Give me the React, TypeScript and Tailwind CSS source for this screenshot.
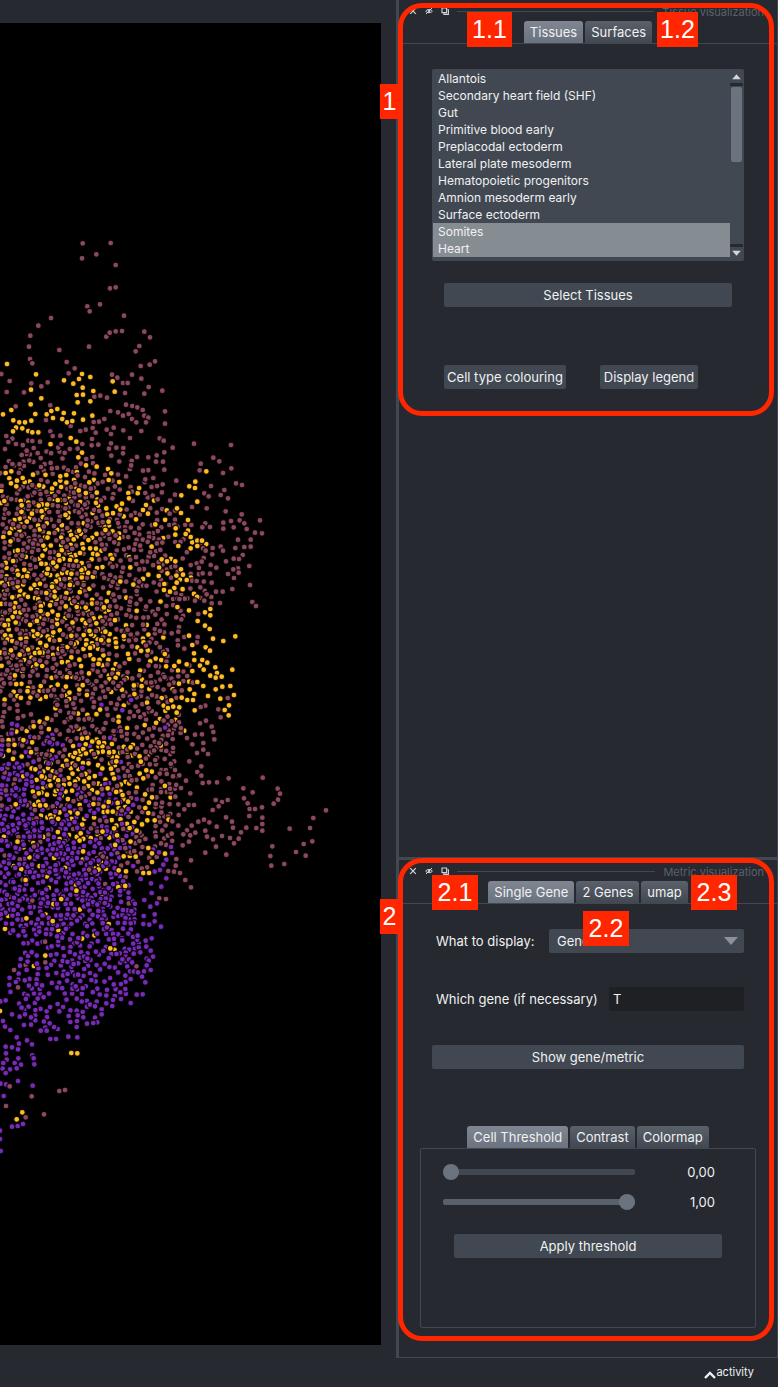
import type { ReactNode } from "react";
import clsx from "clsx";

type Dot = { x: number; y: number; fill: string };

const MAUVE = "#8c495e";
const AMBER = "#ffbb24";
const VIOLET = "#782bb6";

// Outlying cells, stored as flat "x y" lists in thirds of a pixel from a given top edge.
function unpack(top: number, fill: string, data: string): Dot[] {
  const n = data.trim().split(/\s+/).map(Number);
  const dots: Dot[] = [];
  for (let i = 0; i + 1 < n.length; i += 2) dots.push({ x: n[i] / 3, y: top + n[i + 1] / 3, fill });
  return dots;
}

const outliers: Dot[] = [
  ...unpack(220, MAUVE, `248 70 332 69 289 103 246 115 347 135 330 205 347 202 262 259 300 253 269 274 372 287 153 294 115 317 91 347 87 380 178 390 267 380 319 350 329 338 347 334 366 333 433 335 450 352 418 378 407 394 465 424 449 434 422 438 90 417 97 430 200 426 224 445 206 460 4 462 29 483 20 516 72 517 94 490 124 499 143 487 336 464 352 473 396 464 424 476 369 489 383 489 375 519 446 501 433 521 487 512 283 530 301 527 321 533 47 559 151 556 378 554 397 558 412 562 428 570 331 573 354 577 369 587 386 582 396 597 409 607 433 587 445 593 438 607 495 574 495 611 313 597 297 605 281 606 341 623 320 629 333 642 370 631 424 633 390 654 479 655 491 662 518 683 493 697 582 671 693 675 470 706 445 712 411 711 489 725 493 749 640 713 658 724 602 731 599 751 694 745 669 759 529 782 708 790 726 795 633 798 673 810 613 820 626 829 662 825 684 835 525 824 473 838 576 861 620 865 677 874 725 883 509 881 488 793 436 778 429 752 327 686 349 683 370 684 369 700 334 707 138 600 212 618 151 634 158 648 181 647 278 624 257 629 241 633 287 638 276 657 333 670 295 674 275 676 277 711 247 672 37 656 19 648 25 666 48 672 15 687 85 662 97 663 120 665 65 705 80 692`),
  ...unpack(220, AMBER, `21 432 108 463 192 481 246 462 237 477 271 471 220 491 248 503 280 513 230 525 249 524 233 547 271 544 338 484 344 515 93 509 124 535 92 553 9 583 34 570 106 582 140 583 154 573 172 567 191 579 222 580 159 594 187 597 201 607 217 603 249 599 277 587 40 601 58 607 75 607 94 602 48 623 67 625 39 634 85 633 97 637 115 637 212 654 229 665 246 698 235 712 258 736 290 740 324 747 334 760 326 780 358 786 385 819 387 835 438 855 429 870 444 881 531 865 544 879 592 845 544 826 568 799 585 804 586 785 619 754 17 759 34 754 28 775 33 790 51 782 68 774 49 799 99 764 181 769 199 765`),
  ...unpack(500, MAUVE, `780 61 765 98 786 100 725 43 677 34 620 25 719 61 733 70 740 87 693 63 701 82 670 68 670 86 616 70 607 82 630 81 574 75 714 119 752 119 752 140 733 141 706 144 662 140 669 152 728 165 717 177 701 176 678 184 748 198 714 205 716 218 700 208 684 222 702 234 750 255 697 267 757 306 768 318 668 275 648 275 660 309 634 291 635 310 613 302 620 283 649 203 637 163 638 144 609 145 617 152 611 174 632 195 605 185 630 221 635 248 601 262 590 243 608 220 585 302 595 342 537 381 535 395 515 400 533 421 553 411 534 436 553 446 593 411 591 427 544 358 529 352 618 662 635 680 640 696 643 718 600 670 606 703 610 729 591 759 624 762 585 704 561 714 577 733 655 628 662 652 683 594 616 617 602 621 535 529`),
  ...unpack(500, AMBER, `531 25 543 39 564 60 527 85 564 92 572 111 592 122 606 122 592 138 572 145 526 104 535 138 557 102 485 178 501 184 526 184 543 208 549 224 560 240 530 248 523 264 510 275 492 270 476 228 567 331 631 327 615 337 631 346 593 363 615 377 629 387 567 407 639 416 670 423 706 409 577 435 617 442 630 452 582 460 583 480 607 480 622 488 600 497 560 493 537 485 523 498 611 509 577 513 646 502 651 519 631 527 647 533 665 530 697 509 592 546 610 558 537 551 569 568 583 582 667 560 691 558 647 568 702 585 624 588 661 596 687 616 674 630 686 646 562 600 579 600 545 593 584 631 514 601 520 620 538 622 530 638`),
  ...unpack(740, MAUVE, `577 13 610 29 591 39 624 42 568 64 604 79 592 96 604 107 608 129 627 127 651 127 686 115 788 113 730 145 758 157 833 146 840 161 834 179 821 191 571 160 647 180 666 186 683 180 656 199 638 210 732 175 743 190 749 207 765 207 786 202 748 228 787 233 787 252 787 272 769 264 739 263 723 277 716 296 702 310 690 294 699 263 696 245 678 232 666 288 650 260 628 247 612 239 595 245 575 257 561 271 550 283 571 286 586 278 616 272 621 290 639 298 648 320 616 338 679 344 567 305 548 316 573 361 978 211 940 234 930 264 869 266 937 304 911 312 888 336 917 347 817 319 811 348 814 377 853 372 535 193 553 208 566 195 582 195 536 225 535 257 517 244 515 281 529 357 527 377 505 393 522 395 540 399 556 420 573 442 478 475 498 477 558 122 543 144 525 90 538 106 519 109`),
  ...unpack(740, VIOLET, `513 321 516 339 477 337 499 359 490 374 480 390 464 395 499 415 484 440 453 430 455 459 433 480 471 490 451 500 464 523 483 560 464 544 431 528 430 552 448 554 455 595 437 602 439 620 452 632 459 650 440 656 452 690 438 680 426 711 413 587 421 637 401 641`),
  ...unpack(740, AMBER, `456 172 447 188 436 204 445 219 442 241 464 241 403 246 410 272 445 324 371 349 407 350 456 340 495 341 456 366 356 391 378 394 430 399 447 399 430 115`),
  ...unpack(960, VIOLET, `446 2 440 16 432 34 452 30 426 50 436 67 392 57 414 37 376 87 361 97 410 104 428 103 392 129 363 117 337 138 339 120 305 148 305 163 285 173 285 139 319 130 292 187 280 189 261 191 250 172 230 201 211 186 206 168 205 230 232 232 168 237 151 237 173 207 162 201 149 190 136 203 122 212 140 212 106 181 93 194 72 195 50 232 81 241 57 251 96 253 17 260 36 262 54 268 18 280 20 299 55 295 10 309 44 309 63 314 8 326 30 328 50 325 17 339 97 286 101 295 103 313 54 363 2 371 18 373 98 377 11 408 36 500 53 498 69 492 0 512 0 537 2 573 9 183 15 200 31 210 36 163 59 170 75 163 93 172 2 124 17 121`),
  ...unpack(960, MAUVE, `29 379 95 409 178 393 195 390 18 438 132 463 77 472 42 30 136 7 54 82`),
  ...unpack(960, AMBER, `214 279 232 280 67 457 50 478 0 153`),
];

// Dense tissue: [top, height, left, right, mauve, amber, violet]
const bands: [number, number, number, number, number, number, number][] = [
  [444, 16, 16, 95, 16, 1, 0],
  [460, 20, 0, 95, 30, 4, 0],
  [460, 20, 95, 164, 10, 0, 0],
  [480, 20, 0, 100, 44, 20, 0],
  [480, 20, 100, 165, 17, 2, 0],
  [500, 20, 0, 100, 42, 28, 0],
  [500, 20, 100, 175, 16, 11, 0],
  [520, 20, 0, 130, 52, 32, 0],
  [520, 20, 130, 190, 22, 2, 0],
  [540, 20, 0, 130, 50, 32, 0],
  [540, 20, 130, 208, 20, 4, 0],
  [560, 20, 0, 90, 34, 32, 0],
  [560, 20, 90, 205, 36, 11, 0],
  [580, 20, 0, 90, 34, 33, 0],
  [580, 20, 90, 205, 38, 9, 0],
  [600, 20, 0, 110, 44, 35, 0],
  [600, 20, 110, 184, 28, 3, 0],
  [620, 20, 0, 110, 42, 36, 0],
  [620, 20, 110, 168, 19, 9, 0],
  [640, 20, 0, 110, 42, 36, 0],
  [640, 20, 110, 168, 15, 10, 0],
  [660, 20, 0, 120, 50, 21, 0],
  [660, 20, 120, 190, 22, 7, 0],
  [680, 20, 0, 80, 24, 20, 0],
  [680, 20, 80, 195, 44, 11, 0],
  [700, 18, 0, 32, 9, 0, 0],
  [700, 20, 55, 180, 44, 13, 3],
  [718, 22, 0, 60, 20, 6, 6],
  [720, 20, 60, 185, 48, 9, 3],
  [740, 20, 0, 60, 16, 10, 13],
  [740, 20, 60, 135, 12, 30, 3],
  [740, 20, 135, 175, 18, 3, 0],
  [760, 20, 0, 35, 4, 2, 17],
  [760, 20, 35, 125, 15, 33, 8],
  [760, 20, 125, 180, 20, 4, 0],
  [780, 20, 0, 35, 4, 1, 18],
  [780, 20, 35, 130, 14, 32, 15],
  [780, 20, 130, 180, 18, 4, 1],
  [800, 20, 0, 35, 5, 3, 18],
  [800, 20, 35, 135, 11, 30, 28],
  [800, 20, 135, 175, 14, 1, 0],
  [820, 20, 0, 70, 4, 6, 46],
  [820, 20, 70, 135, 9, 15, 20],
  [820, 20, 135, 170, 12, 1, 0],
  [840, 20, 0, 80, 5, 6, 50],
  [840, 20, 80, 130, 8, 4, 18],
  [840, 20, 130, 176, 12, 1, 1],
  [860, 20, 0, 120, 4, 10, 74],
  [860, 20, 120, 154, 7, 0, 2],
  [880, 20, 0, 130, 2, 8, 84],
  [900, 20, 0, 137, 2, 6, 86],
  [920, 16, 0, 135, 0, 5, 54],
  [936, 20, 22, 142, 1, 4, 52],
  [956, 20, 18, 142, 2, 1, 54],
  [976, 20, 8, 128, 0, 0, 48],
  [996, 16, 8, 100, 0, 0, 24],
  [1010, 12, 24, 80, 0, 0, 6],
];

function generator(seed: number) {
  let s = seed;
  return () => {
    s = (s + 0x6d2b79f5) | 0;
    let t = Math.imul(s ^ (s >>> 15), 1 | s);
    t = (t + Math.imul(t ^ (t >>> 7), 61 | t)) ^ t;
    return ((t ^ (t >>> 14)) >>> 0) / 4294967296;
  };
}

function scatter(): Dot[] {
  const rnd = generator(29);
  const placed: Dot[] = [...outliers];
  const result: Dot[] = [];
  for (const [top, height, left, right, m, a, v] of bands) {
    const near = placed.filter((d) => d.y > top - 8 && d.y < top + height + 8);
    const fills = [
      ...Array<string>(m).fill(MAUVE),
      ...Array<string>(a).fill(AMBER),
      ...Array<string>(v).fill(VIOLET),
    ]
      .map((fill) => ({ fill, key: rnd() }))
      .sort((p, q) => p.key - q.key);
    for (const { fill } of fills) {
      let best: Dot | null = null;
      let bestGap = -1;
      for (let k = 0; k < 4; k++) {
        const c = { x: left + rnd() * (right - left), y: top + rnd() * height, fill };
        let gap = 5;
        for (const d of near) gap = Math.min(gap, Math.hypot(d.x - c.x, d.y - c.y));
        if (gap > bestGap) {
          bestGap = gap;
          best = c;
        }
      }
      if (best) {
        near.push(best);
        placed.push(best);
        result.push(best);
      }
    }
  }
  return [...result, ...outliers];
}

const cells = scatter();

function Viewer() {
  return (
    <svg
      viewBox="0 23 381 1322"
      preserveAspectRatio="xMinYMin slice"
      className="block w-full bg-black"
      role="img"
      aria-label="Cells coloured by tissue"
    >
      {cells.map((c, i) => (
        <circle key={i} cx={c.x.toFixed(1)} cy={c.y.toFixed(1)} r={2.9} fill={c.fill} stroke="#000" strokeOpacity={0.85} strokeWidth={1.1} />
      ))}
    </svg>
  );
}

function Callout({ className, children }: { className: string; children: ReactNode }) {
  return (
    <span
      className={clsx(
        "absolute z-20 flex h-[35px] items-center justify-center bg-[#ff2600] font-['Liberation_Sans',sans-serif] text-[25px] leading-none text-white",
        className,
      )}
    >
      {children}
    </span>
  );
}

function DockHeader({ title }: { title: string }) {
  return (
    <header className="flex h-[21px] items-center pt-px pr-[13px] pl-2.5">
      <div className="flex gap-2 text-[#d4d6d8]">
        <button aria-label="Close" className="size-2">
          <svg viewBox="0 0 8 8" className="size-2" fill="none" stroke="currentColor" strokeWidth="1.2">
            <path d="M1.2 1.2 6.8 6.8M6.8 1.2 1.2 6.8" />
          </svg>
        </button>
        <button aria-label="Hide" className="size-2">
          <svg viewBox="0 0 8 8" className="size-2" fill="none" stroke="currentColor" strokeWidth="1">
            <path d="M.6 4.2C2 2 6 2 7.4 4.2 6 6.2 2 6.2.6 4.2ZM1 7 7 1" />
            <circle cx="4" cy="4.1" r="1.2" fill="currentColor" stroke="none" />
          </svg>
        </button>
        <button aria-label="Float" className="size-2">
          <svg viewBox="0 0 8 8" className="size-2" fill="none" stroke="currentColor" strokeWidth="1.1">
            <path d="M1 1h4.6v4.6H1ZM6.4 2.8h1v4.6H2.8v-1" />
          </svg>
        </button>
      </div>
      <div className="mx-2 h-px flex-1 bg-[#414851]" />
      <h2 className="pt-0.5 text-[11px] text-[#5a616b]">{title}</h2>
    </header>
  );
}

function Tabs({ label, names }: { label: string; names: string[] }) {
  return (
    <div role="tablist" aria-label={label} className="flex h-[22px] justify-center gap-0.5">
      {names.map((name, i) => (
        <button
          key={name}
          role="tab"
          aria-selected={i === 0}
          className={clsx(
            "rounded-t-[3px] bg-linear-to-b px-1.5 leading-[22px]",
            i === 0 ? "from-[#808792] to-[#69727e]" : "from-[#5a616b] to-[#414851]",
          )}
        >
          {name}
        </button>
      ))}
    </div>
  );
}

function PushButton({ className, children }: { className?: string; children: ReactNode }) {
  return <button className={clsx("h-6 rounded-[2px] bg-[#414851] leading-6", className)}>{children}</button>;
}

const tissues = [
  "Allantois",
  "Secondary heart field (SHF)",
  "Gut",
  "Primitive blood early",
  "Preplacodal ectoderm",
  "Lateral plate mesoderm",
  "Hematopoietic progenitors",
  "Amnion mesoderm early",
  "Surface ectoderm",
  "Somites",
  "Heart",
];
const chosen = ["Somites", "Heart"];

function TissueList() {
  return (
    <div className="flex h-48 rounded-[2px] bg-[#414851] p-px">
      <ul role="listbox" aria-label="Tissues" aria-multiselectable="true" className="flex-1 text-[12px] leading-[17px]">
        {tissues.map((t) => (
          <li
            key={t}
            role="option"
            aria-selected={chosen.includes(t)}
            className={clsx("px-[5px]", chosen.includes(t) && "bg-[#868d92]")}
          >
            {t}
          </li>
        ))}
      </ul>
      <div className="flex w-[13px] flex-col items-center" aria-hidden="true">
        <svg viewBox="0 0 13 13" className="h-[13px] w-[13px]">
          <path d="M2.2 9.2 6.5 4.2 10.8 9.2Z" fill="#d4d6d8" />
        </svg>
        <div className="h-[3px] w-full bg-[#262930]" />
        <div className="mt-px h-[75px] w-[11px] rounded-[2px] bg-[#6a737e]" />
        <div className="mt-auto h-[3px] w-full bg-[#262930]" />
        <svg viewBox="0 0 13 13" className="h-[13px] w-[13px]">
          <path d="M2.2 3.8 6.5 8.8 10.8 3.8Z" fill="#d4d6d8" />
        </svg>
      </div>
    </div>
  );
}

function ThresholdSlider({ label, value, text }: { label: string; value: number; text: string }) {
  return (
    <div className="flex h-[30px] items-center justify-between pr-[18px]">
      <input
        type="range"
        aria-label={label}
        min={0}
        max={1}
        step={0.01}
        defaultValue={value}
        className={clsx(
          "h-1.5 w-48 appearance-none rounded-[2px] [&::-webkit-slider-thumb]:size-4 [&::-webkit-slider-thumb]:appearance-none [&::-webkit-slider-thumb]:rounded-full [&::-webkit-slider-thumb]:bg-[#6a737e]",
          value > 0 ? "bg-[#5a616b]" : "bg-[#414851]",
        )}
      />
      <output className="leading-6">{text}</output>
    </div>
  );
}

export default function App() {
  return (
    <div className="flex min-h-screen flex-col bg-[#262930] font-[Inter,sans-serif] text-[13px] text-[#f0f1f2]">
      <main className="flex flex-1">
        <section className="min-w-0 flex-1 pt-[23px] pr-[15px] pb-3">
          <Viewer />
        </section>

        <aside className="flex w-[382px] flex-col border-r border-l-3 border-[#414851]">
          <section className="relative h-[857px]">
            <div className="pointer-events-none absolute top-[3px] right-[3px] -left-px z-10 h-[413px] rounded-3xl border-5 border-[#ff2600]" />
            <Callout className="top-3 left-[68px] w-[45px]">1.1</Callout>
            <Callout className="top-3 left-[258px] w-[41px]">1.2</Callout>
            <Callout className="top-[84px] -left-[19px] w-[19px]">1</Callout>
            <DockHeader title="Tissue visualization" />
            <Tabs label="Tissue visualization" names={["Tissues", "Surfaces"]} />
            <div className="flex flex-col border-t border-[#414851] px-[33px] pt-[25px]">
              <TissueList />
              <div className="flex flex-col px-3 pt-[22px]">
                <PushButton>Select Tissues</PushButton>
                <div className="mt-[58px] flex gap-[34px]">
                  <PushButton className="w-[122px]">Cell type colouring</PushButton>
                  <PushButton className="w-[98px]">Display legend</PushButton>
                </div>
              </div>
            </div>
          </section>

          <section className="relative flex-1 border-t-3 border-b border-[#414851]">
            <div className="pointer-events-none absolute -top-[2px] right-[3px] -left-px z-10 h-[483px] rounded-3xl border-5 border-[#ff2600]" />
            <Callout className="top-[15px] left-[33px] w-[46px]">2.1</Callout>
            <Callout className="top-[51px] left-[184px] w-[46px]">2.2</Callout>
            <Callout className="top-[15px] left-[292px] w-[46px]">2.3</Callout>
            <Callout className="top-[39px] -left-[19px] w-[19px]">2</Callout>
            <DockHeader title="Metric visualization" />
            <Tabs label="Metric visualization" names={["Single Gene", "2 Genes", "umap"]} />
            <div className="border-t border-[#414851] px-[21px] pt-[25px]">
              <div className="flex flex-col px-3">
                <div className="flex items-center justify-between pl-1">
                  <label htmlFor="metric" className="leading-6">What to display:</label>
                  <div className="relative w-[195px]">
                    <select id="metric" className="block h-6 w-full appearance-none rounded-[2px] bg-[#414851] px-2 leading-6">
                      <option>Gene</option>
                    </select>
                    <svg viewBox="0 0 14 8" className="pointer-events-none absolute top-2 right-1.5 h-2 w-3.5">
                      <path d="M0 0H14L7 8Z" fill="#8d9299" />
                    </svg>
                  </div>
                </div>
                <div className="mt-[34px] flex items-center justify-between pl-1">
                  <label htmlFor="gene" className="leading-6">Which gene (if necessary)</label>
                  <input id="gene" type="text" defaultValue="T" className="h-6 w-[135px] rounded-[2px] bg-[#1f2023] px-1 leading-6" />
                </div>
                <PushButton className="mt-[34px]">Show gene/metric</PushButton>
              </div>
              <div className="pt-[57px]">
                <Tabs label="Display range" names={["Cell Threshold", "Contrast", "Colormap"]} />
                <div className="flex h-[180px] flex-col rounded-[2px] border border-[#414851] px-[22px] pt-2">
                  <ThresholdSlider label="Lower threshold" value={0} text="0,00" />
                  <ThresholdSlider label="Upper threshold" value={1} text="1,00" />
                  <PushButton className="mx-[11px] mt-[17px]">Apply threshold</PushButton>
                </div>
              </div>
            </div>
          </section>
        </aside>
      </main>

      <footer className="flex h-[29px] items-center justify-end pr-6">
        <button className="flex items-center text-[11px]">
          <svg viewBox="0 0 12 8" className="mt-1 h-2 w-3" fill="none" stroke="currentColor" strokeWidth="2.4">
            <path d="M1 7 6 2 11 7" />
          </svg>
          activity
        </button>
      </footer>
    </div>
  );
}
